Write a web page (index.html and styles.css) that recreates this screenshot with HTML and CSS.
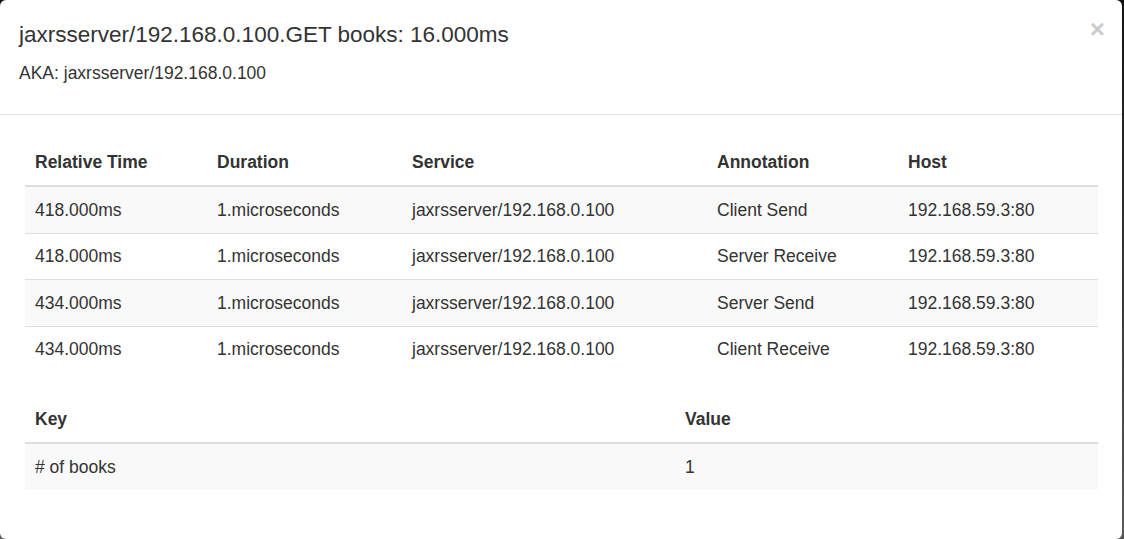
FILE: index.html
```html
<!DOCTYPE html>
<html>
<head>
<meta charset="utf-8">
<link rel="stylesheet" href="styles.css">
</head>
<body>
<div class="modal">
  <div class="modal-header">
    <button class="close" type="button">×</button>
    <h4 class="modal-title">jaxrsserver/192.168.0.100.GET books: 16.000ms</h4>
    <p class="aka">AKA: jaxrsserver/192.168.0.100</p>
  </div>
  <div class="modal-body">
    <table class="table spans">
      <colgroup>
        <col class="c-time"><col class="c-dur"><col class="c-svc"><col class="c-ann"><col class="c-host">
      </colgroup>
      <thead>
        <tr><th>Relative Time</th><th>Duration</th><th>Service</th><th>Annotation</th><th>Host</th></tr>
      </thead>
      <tbody>
        <tr><td>418.000ms</td><td>1.microseconds</td><td>jaxrsserver/192.168.0.100</td><td>Client Send</td><td>192.168.59.3:80</td></tr>
        <tr><td>418.000ms</td><td>1.microseconds</td><td>jaxrsserver/192.168.0.100</td><td>Server Receive</td><td>192.168.59.3:80</td></tr>
        <tr><td>434.000ms</td><td>1.microseconds</td><td>jaxrsserver/192.168.0.100</td><td>Server Send</td><td>192.168.59.3:80</td></tr>
        <tr><td>434.000ms</td><td>1.microseconds</td><td>jaxrsserver/192.168.0.100</td><td>Client Receive</td><td>192.168.59.3:80</td></tr>
      </tbody>
    </table>
    <table class="table kv">
      <colgroup><col class="c-key"><col class="c-val"></colgroup>
      <thead><tr><th>Key</th><th>Value</th></tr></thead>
      <tbody><tr><td># of books</td><td>1</td></tr></tbody>
    </table>
  </div>
</div>
</body>
</html>
```
FILE: styles.css
```css
html, body {
  margin: 0;
  padding: 0;
  height: 539px;
  overflow: hidden;
}
body {
  background: linear-gradient(#111, #5a5a5a);
  font-family: "Liberation Sans", Arial, sans-serif;
  color: #333;
}
.modal {
  width: 1122px;
  height: 539px;
  background: #fff;
  border-radius: 6px;
  box-sizing: border-box;
}
.modal-header {
  position: relative;
  padding: 19px 19px 28px;
  border-bottom: 1px solid #e5e5e5;
}
.modal-title {
  margin: 0;
  font-size: 22.5px;
  font-weight: normal;
  line-height: 32px;
}
.aka {
  margin: 10px 0 0;
  font-size: 17.5px;
  line-height: 25px;
}
.close {
  position: absolute;
  top: 14px;
  right: 17px;
  padding: 0;
  border: 0;
  background: none;
  font-family: "Liberation Sans", Arial, sans-serif;
  font-size: 26px;
  font-weight: bold;
  line-height: 30px;
  color: #000;
  opacity: 0.2;
}
.modal-body {
  padding: 25px;
}
.table {
  width: 100%;
  border-collapse: collapse;
  table-layout: fixed;
  margin-bottom: 25px;
  font-size: 17.5px;
  line-height: 25px;
}
.table:last-child {
  margin-bottom: 0;
}
.table th,
.table td {
  padding: 10px;
  text-align: left;
  vertical-align: top;
  white-space: nowrap;
}
.table td {
  padding-top: 10.5px;
}
.table th {
  font-weight: bold;
  border-bottom: 2px solid #ddd;
}
.table td {
  border-top: 1px solid #ddd;
}
.table tbody tr:first-child td {
  border-top: 0;
}
.table tbody tr:nth-child(odd) {
  background: #f9f9f9;
}
.c-time { width: 182px; }
.c-dur { width: 195px; }
.c-svc { width: 305px; }
.c-ann { width: 191px; }
.c-host { width: 200px; }
.c-key { width: 650px; }
.c-val { width: 423px; }
```
